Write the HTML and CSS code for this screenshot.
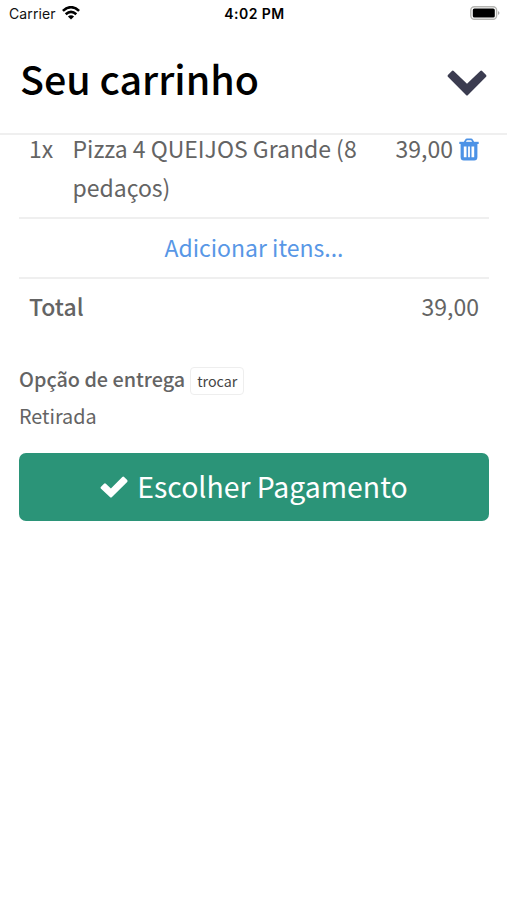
FILE: index.html
```html
<!DOCTYPE html>
<html lang="pt-BR">
<head>
<meta charset="utf-8">
<meta name="viewport" content="width=device-width, initial-scale=1">
<title>Seu carrinho</title>
<link rel="stylesheet" href="styles.css">
</head>
<body>
<div class="status">
  <div class="carrier"><span class="carrier-name">Carrier</span>
    <svg class="wifi" viewBox="0 0 18 14" fill="none" stroke="#000" stroke-width="2.6"><path d="M.9 4.9Q9-2.500 17.100 4.900M3.700 8.200Q9 3.500 14.300 8.200"/><path d="M9 13.600 5.900 10.500Q9 8 12.100 10.500Z" fill="#000" stroke="none"/></svg>
  </div>
  <span class="time">4:02 PM</span>
  <svg class="battery" viewBox="0 0 30 14"><rect x=".8" y=".8" width="25.8" height="12.4" rx="3.5" fill="#fff" stroke="#b5b5b2" stroke-width="1.4"/><rect x="2.8" y="2.5" width="22" height="9" rx="1.6"/><path d="M28 5q3 2 0 4z" fill="#aaa"/></svg>
</div>
<header class="header">
  <h1 class="title">Seu carrinho</h1>
  <svg class="chevron" viewBox="0 0 40 26"><path d="M.9 5 4.900.900Q5.800.100 6.700.900L20 13.800 33.300.900Q34.200.100 35.100.900L39.100 5Q39.900 5.900 39.100 6.800L21 24.900Q20 25.900 19 24.900L.9 6.800Q.1 5.900.9 5Z" fill="#3b3c50"/></svg>
</header>
<main class="cart">
  <div class="row item">
    <span class="qty">1x</span>
    <span class="name">Pizza 4 QUEIJOS Grande (8 pedaços)</span>
    <span class="price">39,00</span>
    <svg class="trash" viewBox="0 0 20 23" fill="none" stroke="#4c92e6"><path d="M5.600 4.500 7 1.900Q7.300 1.300 8 1.300H12Q12.700 1.300 13 1.900L14.400 4.500" stroke-width="1.800"/><path d="M.3 4.900H19.700" stroke-width="2.200"/><path d="M3.200 5.500V19Q3.200 20.900 4.800 20.900H15.200Q16.800 20.900 16.800 19V5.500" stroke-width="3.200"/><path d="M3 7H17" stroke-width="3"/><path d="M8.300 7.500V20M11.700 7.500V20" stroke-width="1.600"/></svg>
  </div>
  <a class="row add">Adicionar itens...</a>
  <div class="row total"><strong class="label">Total</strong><span class="sum">39,00</span></div>
  <section class="delivery">
    <div class="option"><strong class="option-name">Opção de entrega</strong><button class="change">trocar</button></div>
    <div class="pickup">Retirada</div>
  </section>
  <button class="pay"><svg class="check" viewBox="0 0 28 22"><path d="M.8 11 4 7.700Q5 6.900 5.900 7.700L10.900 12.400 22.300 1Q23.200.2 24.100 1L27.200 4.100Q28 5 27.200 5.900L12 21Q10.900 22 9.900 21L.8 12.500Q.2 11.700.8 11Z" fill="#fff"/></svg><span class="pay-text">Escolher Pagamento</span></button>
</main>
</body>
</html>
```
FILE: styles.css
```css
* { box-sizing: border-box; }
body {
  margin: 0;
  background: #fff;
  color: #646464;
  font-family: "Noto Sans CJK SC", "Noto Sans", sans-serif;
}
button { font-family: inherit; }
svg { display: block; flex: none; }
.status {
  display: grid;
  grid-template-columns: 1fr auto 1fr;
  align-items: center;
  height: 27px;
  padding: 0 7px 0 9px;
  color: #111;
  font: 14px/27px Inter, sans-serif;
}
.carrier { display: flex; align-items: center; gap: 6px; }
.carrier-name { letter-spacing: 0.1px; }
.wifi { width: 18px; height: 14px; margin-top: -1px; }
.time { font-weight: 600; color: #000; letter-spacing: 0.45px; }
.battery { width: 30px; height: 14px; margin-top: -1px; justify-self: end; }
.header {
  display: flex;
  align-items: center;
  justify-content: space-between;
  height: 108px;
  padding: 0 20px;
  border-bottom: 2px solid #efefef;
}
.title {
  margin: -5px 0 0;
  color: #000;
  font-size: 39.4px;
  font-weight: 500;
  line-height: 60px;
}
.chevron { width: 40px; height: 26px; margin-top: 5px; }
.cart { padding: 0 18px 0 19px; }
.row {
  display: flex;
  padding: 10px;
  border-bottom: 2px solid #efefef;
  font-size: 23px;
  line-height: 39px;
}
.item { padding-top: 0; padding-bottom: 10px; margin-top: -6px; clip-path: inset(6px 0 0); }
.qty { width: 43.5px; }
.name { flex: 1; }
.price { margin: 0 6px 0 19px; }
.trash { width: 20px; height: 23px; margin-top: 9px; }
.add { justify-content: center; color: #5897e6; padding: 9px 10px 10px; }
.total { justify-content: space-between; border: 0; padding-top: 8px; }
.label, .option-name { font-weight: 500; }
.delivery { margin-top: 31px; font-size: 19.8px; }
.option { display: flex; align-items: center; gap: 5px; height: 28px; }
.option-name { margin-top: -6px; }
.change {
  height: 28px;
  padding: 0 6px;
  border: 1px solid #eee;
  border-radius: 4px;
  background: #fff;
  color: #444;
  font-size: 14.3px;
  line-height: 26px;
}
.pickup { margin-top: 3px; line-height: 36px; }
.pay {
  display: flex;
  align-items: center;
  justify-content: center;
  gap: 9px;
  width: 100%;
  height: 68px;
  margin-top: 19px;
  border: 0;
  border-radius: 7px;
  background: #2b9478;
  color: #fff;
  font-size: 28.4px;
}
.pay-text { margin-top: -3px; }
.check { width: 28px; height: 22px; }
```
